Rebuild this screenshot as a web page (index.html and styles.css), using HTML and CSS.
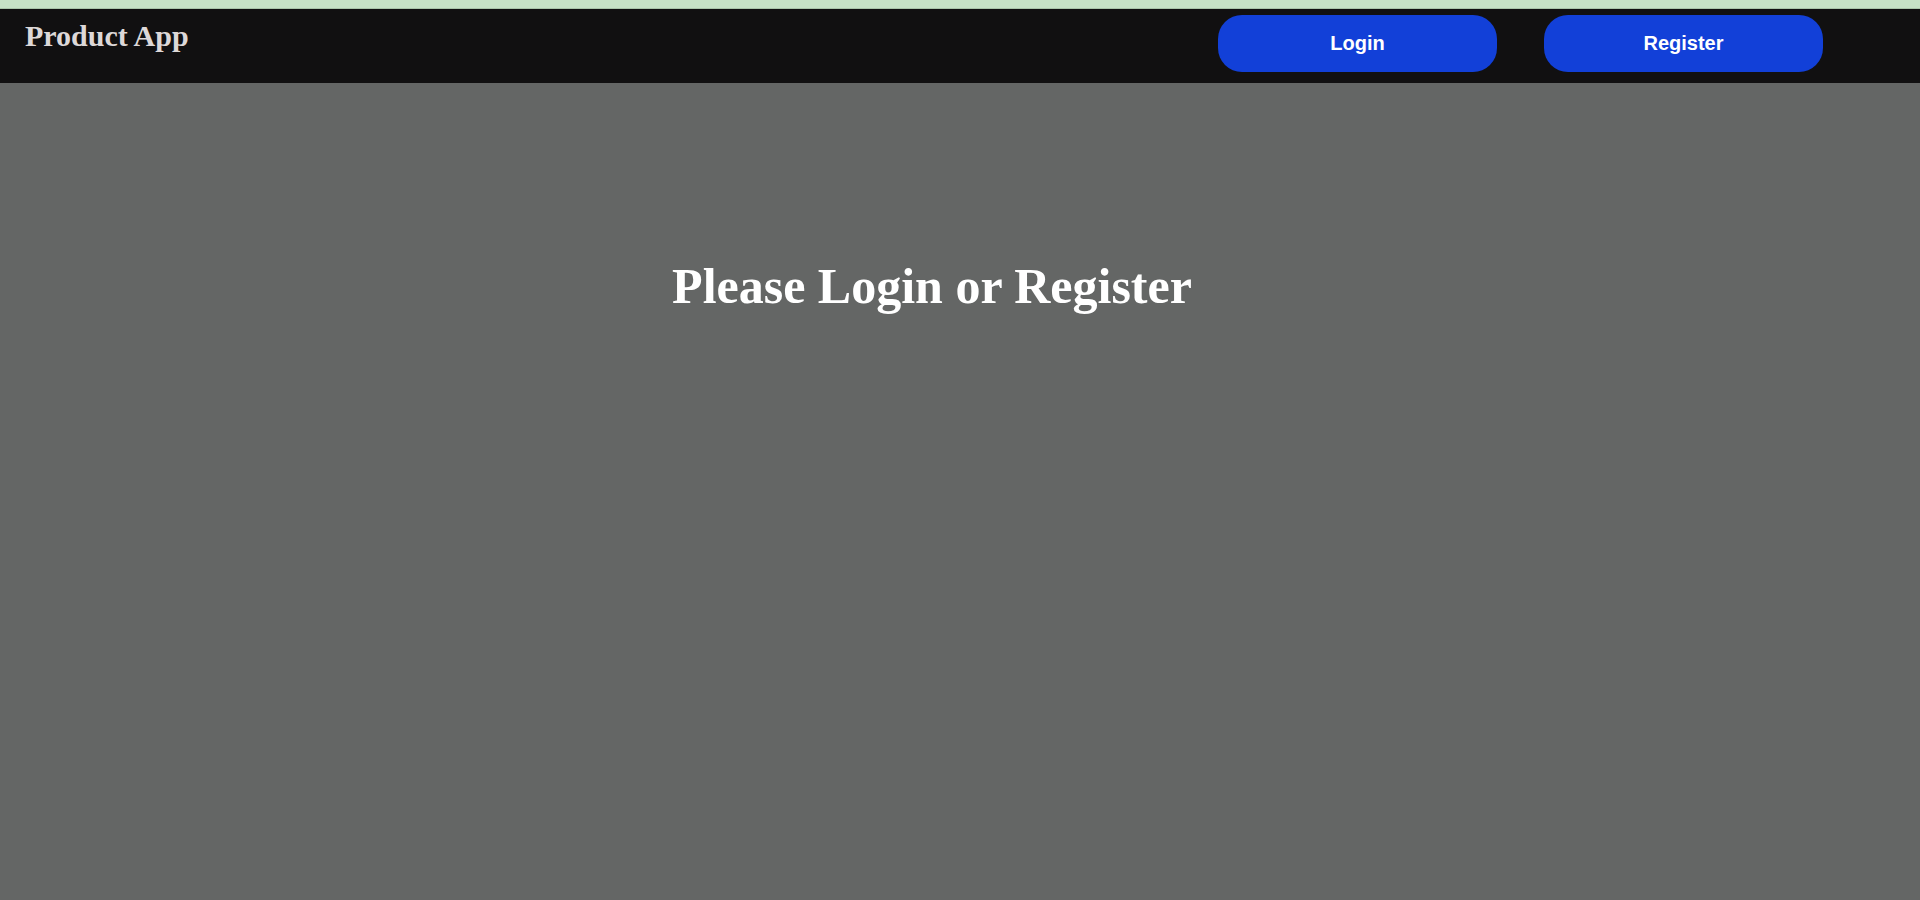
FILE: index.html
```html
<!DOCTYPE html>
<html lang="en">
<head>
<meta charset="utf-8">
<title>Product App</title>
<link rel="stylesheet" href="styles.css">
</head>
<body>
<div class="topstrip"></div>
<nav class="navbar">
  <div class="brand">Product App</div>
  <div class="actions">
    <button class="btn">Login</button>
    <button class="btn">Register</button>
  </div>
</nav>
<main class="content">
  <h1 class="prompt">Please Login or Register</h1>
</main>
</body>
</html>
```
FILE: styles.css
```css
html {
  background: #646665;
}
body {
  margin: 0;
  min-height: 900px;
  background: #646665;
  font-family: "Liberation Serif", "Times New Roman", serif;
  display: flex;
  flex-direction: column;
}
.topstrip {
  height: 8px;
  background: #c6e2c6;
  border-bottom: 1px solid #a9c4a9;
}
.navbar {
  height: 74px;
  background: #111011;
  display: flex;
  justify-content: space-between;
  align-items: flex-start;
  padding: 0 97px 0 25px;
}
.brand {
  margin-top: 10px;
  font-family: "Liberation Serif", "Times New Roman", serif;
  font-weight: bold;
  font-size: 30px;
  color: #ddd8d8;
}
.actions {
  display: flex;
  gap: 47px;
  margin-top: 6px;
}
.btn {
  width: 279px;
  height: 57px;
  border: none;
  border-radius: 24px;
  background: #1240d8;
  color: #ffffff;
  font-family: "Liberation Sans", Arial, sans-serif;
  font-weight: bold;
  font-size: 20px;
  padding: 0;
  cursor: pointer;
}
.content {
  flex: 1;
  background: #646665;
  padding-top: 174px;
}
.prompt {
  margin: 0;
  padding-right: 56px;
  text-align: center;
  font-family: "Liberation Serif", "Times New Roman", serif;
  font-weight: bold;
  font-size: 50px;
  color: #ffffff;
}
```
